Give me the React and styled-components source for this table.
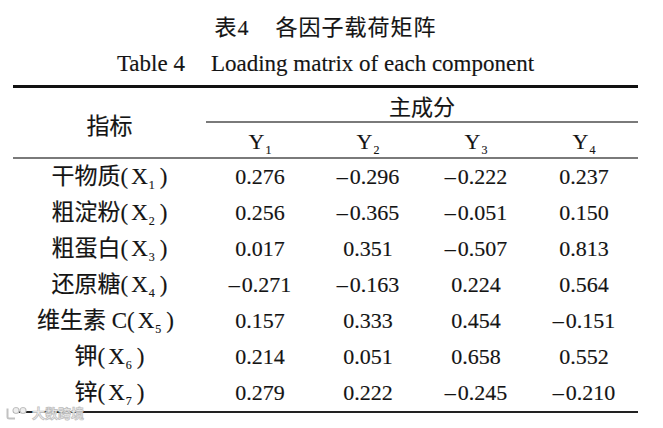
import React from 'react';
import styled, { createGlobalStyle } from 'styled-components';

const GlobalStyle = createGlobalStyle`
  html, body {
    margin: 0;
    padding: 0;
    background: #ffffff;
  }
  body {
    font-family: "Liberation Serif", "Noto Sans CJK SC", serif;
    color: #141414;
    -webkit-text-stroke: 0.15px #141414;
  }
`;

const Page = styled.div`
  position: relative;
  width: 663px;
  height: 428px;
  overflow: hidden;
  background: #fff;
`;

const Sheet = styled.div`
  width: 625px;
  margin-left: 13px;
`;

const Caption = styled.div`
  height: 85px;
  display: flex;
  flex-direction: column;
  align-items: center;
`;

const CaptionCn = styled.div`
  margin-top: 13px;
  font-size: 22px;
  line-height: 30px;
  letter-spacing: 1px;
  white-space: nowrap;
`;

const CaptionEn = styled.div`
  margin-top: 7px;
  font-size: 23px;
  line-height: 28px;
  white-space: nowrap;
`;

const Gap = styled.span`
  display: inline-block;
  width: ${p => p.w}px;
`;

const Table = styled.div`
  border-top: 3px solid #111;
  border-bottom: 2px solid #222;
`;

const Head = styled.div`
  display: grid;
  grid-template-columns: 193px repeat(4, 1fr);
  grid-template-rows: 35px 34px;
  border-bottom: 2px solid #7a7a7a;
`;

const HeadLabel = styled.div`
  grid-row: 1 / span 2;
  display: flex;
  align-items: center;
  justify-content: center;
  padding-top: 3px;
  font-size: 23px;
`;

const GroupTitle = styled.div`
  grid-column: 2 / span 4;
  display: flex;
  align-items: center;
  justify-content: center;
  border-bottom: 2px solid #7a7a7a;
  font-size: 22px;
  padding-top: 1px;
`;

const HeadCell = styled.div`
  text-align: center;
  font-size: 22px;
  line-height: 34px;
  padding-top: 2px;
`;

const Row = styled.div`
  display: grid;
  grid-template-columns: 193px repeat(4, 1fr);
  height: 36px;
  align-items: center;
`;

const Label = styled.div`
  text-align: center;
  font-size: 23px;
  line-height: 30px;
  white-space: nowrap;
  padding-right: ${p => (p.wide ? 8 : 0)}px;
`;

const Value = styled.div`
  text-align: center;
  font-size: 22px;
  white-space: nowrap;
  padding-left: ${p => p.shift || 0}px;
`;

const Minus = styled.span`
  margin-right: 2px;
`;

const Sub = styled.sub`
  font-size: 12px;
  vertical-align: -5px;
  line-height: 0;
  margin-left: 1px;
`;

const Paren = styled.span`
  margin: ${p => (p.open ? '0 3px 0 0' : '0 0 0 5px')};
`;

const Watermark = styled.div`
  position: absolute;
  left: 5px;
  top: 406px;
  display: flex;
  align-items: center;
  gap: 3px;
  font-family: "Noto Sans CJK SC", sans-serif;
  font-size: 13px;
  line-height: 14px;
  font-weight: 700;
  color: #eeeeee;
  -webkit-text-stroke: 0.7px #bdbdbd;
`;

const rows = [
  { name: '干物质', sub: 1, v: ['0.276', '-0.296', '-0.222', '0.237'] },
  { name: '粗淀粉', sub: 2, v: ['0.256', '-0.365', '-0.051', '0.150'] },
  { name: '粗蛋白', sub: 3, v: ['0.017', '0.351', '-0.507', '0.813'] },
  { name: '还原糖', sub: 4, v: ['-0.271', '-0.163', '0.224', '0.564'] },
  { name: '维生素 C', sub: 5, v: ['0.157', '0.333', '0.454', '-0.151'], wide: true },
  { name: '钾', sub: 6, v: ['0.214', '0.051', '0.658', '0.552'] },
  { name: '锌', sub: 7, v: ['0.279', '0.222', '-0.245', '-0.210'] },
];

const Num = ({ value }) => {
  const neg = value.startsWith('-');
  const shift = neg ? 0 : -4;
  return (
    <Value shift={shift}>
      {neg && <Minus>–</Minus>}
      {neg ? value.slice(1) : value}
    </Value>
  );
};

const LogoMark = () => (
  <svg width="24" height="14" viewBox="0 0 24 14">
    <path d="M2.5 2.5 L2.5 11 Q2.5 12.5 4.5 12.5 L10 12.5" fill="none" stroke="#c2c2c2" strokeWidth="2" />
    <circle cx="11" cy="4.5" r="3" fill="#eeeeee" stroke="#c2c2c2" strokeWidth="1.2" />
    <circle cx="18" cy="4.5" r="3" fill="#eeeeee" stroke="#c2c2c2" strokeWidth="1.2" />
  </svg>
);

const App = () => (
  <Page>
    <GlobalStyle />
    <Sheet>
      <Caption>
        <CaptionCn>
          表4<Gap w={26} />各因子载荷矩阵
        </CaptionCn>
        <CaptionEn>
          Table 4<Gap w={26} />Loading matrix of each component
        </CaptionEn>
      </Caption>
      <Table>
        <Head>
          <HeadLabel>指标</HeadLabel>
          <GroupTitle>主成分</GroupTitle>
          {[1, 2, 3, 4].map(n => (
            <HeadCell key={n}>
              Y<Sub>{n}</Sub>
            </HeadCell>
          ))}
        </Head>
        {rows.map(r => (
          <Row key={r.sub}>
            <Label wide={r.wide}>
              {r.name}
              <Paren open>(</Paren>X<Sub>{r.sub}</Sub>
              <Paren>)</Paren>
            </Label>
            {r.v.map((val, i) => (
              <Num key={i} value={val} />
            ))}
          </Row>
        ))}
      </Table>
    </Sheet>
    <Watermark>
      <LogoMark />
      大数跨境
    </Watermark>
  </Page>
);

export default App;
